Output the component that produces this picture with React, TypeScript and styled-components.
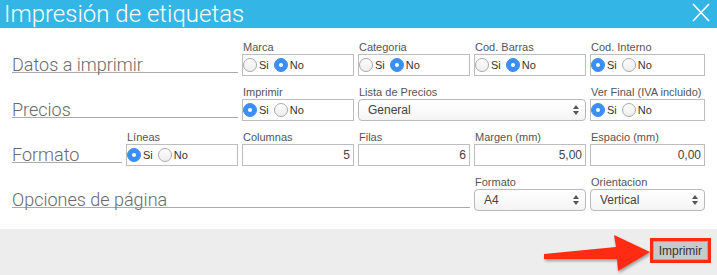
import React from "react";
import styled, { createGlobalStyle } from "styled-components";

const GlobalStyle = createGlobalStyle`
  html, body {
    margin: 0;
    padding: 0;
    background: #ffffff;
  }
  body {
    font-family: "Liberation Sans", Arial, sans-serif;
  }
`;

const Dialog = styled.div`
  width: 717px;
  height: 275px;
  display: flex;
  flex-direction: column;
  background: #fff;
  overflow: hidden;
`;

const Header = styled.div`
  height: 28px;
  background: #33b5e5;
  display: flex;
  align-items: center;
  justify-content: space-between;
  padding: 0 7px 0 4px;
`;

const Title = styled.h1`
  margin: 0;
  font-family: "Roboto Light", Roboto, "Noto Sans", sans-serif;
  font-weight: 300;
  font-size: 24px;
  line-height: 28px;
  color: #fff;
`;

const CloseButton = styled.button`
  border: 0;
  padding: 0;
  background: none;
  width: 18px;
  height: 19px;
  display: flex;
  margin-top: -3px;
`;

const Body = styled.div`
  flex: 1;
  padding: 12px 12px 0 12px;
  display: flex;
  flex-direction: column;
  gap: 9px;
`;

const Row = styled.div`
  display: grid;
  grid-template-columns: 110px 112px 112px 112px 112px 115px;
  column-gap: 4px;
  align-items: end;
`;

const SectionTitle = styled.div<{ $span: number }>`
  grid-column: span ${(p) => p.$span};
  font-family: "Roboto Light", Roboto, "Noto Sans", sans-serif;
  font-weight: 300;
  font-size: 18px;
  line-height: 15px;
  color: #6a6a6a;
  border-bottom: 1px solid #aaa;
  margin-bottom: 3px;
  white-space: nowrap;
`;

const Field = styled.div<{ $span?: number }>`
  grid-column: span ${(p) => p.$span ?? 1};
  display: flex;
  flex-direction: column;
`;

const FieldLabel = styled.label`
  font-size: 11px;
  line-height: 14px;
  height: 14px;
  color: #555;
  padding-left: 1px;
  white-space: nowrap;
`;

const RadioBox = styled.div`
  height: 22px;
  box-sizing: border-box;
  border: 1px solid #bdbdbd;
  display: flex;
  align-items: center;
  background: #fff;
`;

const RadioOption = styled.span`
  display: flex;
  align-items: center;
  gap: 2px;
  margin-right: 5px;
  font-size: 11px;
  color: #333;
`;

const RadioDot = styled.span<{ $checked: boolean }>`
  width: 14px;
  height: 14px;
  box-sizing: border-box;
  border-radius: 50%;
  display: inline-flex;
  align-items: center;
  justify-content: center;
  background: ${(p) => (p.$checked ? "#3b8ef5" : "linear-gradient(#fdfdfd, #eeeeee)")};
  border: 1px solid ${(p) => (p.$checked ? "#3b8ef5" : "#a9a9a9")};
  &::after {
    content: "";
    width: 4px;
    height: 4px;
    border-radius: 50%;
    background: #fff;
    display: ${(p) => (p.$checked ? "block" : "none")};
  }
`;

const NumberInput = styled.div`
  height: 22px;
  box-sizing: border-box;
  border: 1px solid #bdbdbd;
  display: flex;
  align-items: center;
  justify-content: flex-end;
  padding-right: 3px;
  font-size: 12px;
  color: #444;
  background: #fff;
`;

const Select = styled.div`
  height: 22px;
  box-sizing: border-box;
  border: 1px solid #b9b9b9;
  border-radius: 4px;
  background: linear-gradient(#ffffff, #f4f4f4);
  display: flex;
  align-items: center;
  justify-content: space-between;
  padding: 0 6px 0 9px;
  font-size: 12px;
  color: #444;
`;

const Footer = styled.div`
  position: relative;
  height: 46px;
  background: #ededed;
  display: flex;
  justify-content: flex-end;
  align-items: flex-start;
  padding: 9px 6px 0 0;
  box-sizing: border-box;
`;

const PrintButton = styled.button`
  height: 25px;
  box-sizing: border-box;
  border: 3px solid #ff2b12;
  background: #c9c9c9;
  box-shadow: inset 0 0 0 1px #a9a9a9;
  padding: 0 6px;
  font-family: "Liberation Sans", Arial, sans-serif;
  font-size: 12px;
  color: #333;
`;

const Arrow = styled.svg`
  position: absolute;
  left: 540px;
  top: 0;
  filter: drop-shadow(1px 2px 1.5px rgba(0, 0, 0, 0.35));
`;

function Radio({ value }: { value: "si" | "no" }) {
  return (
    <RadioBox>
      <RadioOption>
        <RadioDot $checked={value === "si"} />
        Si
      </RadioOption>
      <RadioOption>
        <RadioDot $checked={value === "no"} />
        No
      </RadioOption>
    </RadioBox>
  );
}

function SelectArrows() {
  return (
    <svg width="6" height="10" viewBox="0 0 6 10">
      <path d="M0 4 L3 0 L6 4 Z" fill="#555" />
      <path d="M0 6 L3 10 L6 6 Z" fill="#555" />
    </svg>
  );
}

export default function App() {
  return (
    <>
      <GlobalStyle />
      <Dialog>
        <Header>
          <Title>Impresión de etiquetas</Title>
          <CloseButton aria-label="Cerrar">
            <svg width="18" height="19" viewBox="0 0 18 19">
              <path d="M1 1 L17 18 M17 1 L1 18" stroke="#fff" strokeWidth="1.6" />
            </svg>
          </CloseButton>
        </Header>
        <Body>
          <Row>
            <SectionTitle $span={2}>Datos a imprimir</SectionTitle>
            <Field>
              <FieldLabel>Marca</FieldLabel>
              <Radio value="no" />
            </Field>
            <Field>
              <FieldLabel>Categoria</FieldLabel>
              <Radio value="no" />
            </Field>
            <Field>
              <FieldLabel>Cod. Barras</FieldLabel>
              <Radio value="no" />
            </Field>
            <Field>
              <FieldLabel>Cod. Interno</FieldLabel>
              <Radio value="si" />
            </Field>
          </Row>
          <Row>
            <SectionTitle $span={2}>Precios</SectionTitle>
            <Field>
              <FieldLabel>Imprimir</FieldLabel>
              <Radio value="si" />
            </Field>
            <Field $span={2}>
              <FieldLabel>Lista de Precios</FieldLabel>
              <Select>
                General
                <SelectArrows />
              </Select>
            </Field>
            <Field>
              <FieldLabel>Ver Final (IVA incluido)</FieldLabel>
              <Radio value="si" />
            </Field>
          </Row>
          <Row>
            <SectionTitle $span={1}>Formato</SectionTitle>
            <Field>
              <FieldLabel>Líneas</FieldLabel>
              <Radio value="si" />
            </Field>
            <Field>
              <FieldLabel>Columnas</FieldLabel>
              <NumberInput>5</NumberInput>
            </Field>
            <Field>
              <FieldLabel>Filas</FieldLabel>
              <NumberInput>6</NumberInput>
            </Field>
            <Field>
              <FieldLabel>Margen (mm)</FieldLabel>
              <NumberInput>5,00</NumberInput>
            </Field>
            <Field>
              <FieldLabel>Espacio (mm)</FieldLabel>
              <NumberInput>0,00</NumberInput>
            </Field>
          </Row>
          <Row>
            <SectionTitle $span={4}>Opciones de página</SectionTitle>
            <Field>
              <FieldLabel>Formato</FieldLabel>
              <Select>
                A4
                <SelectArrows />
              </Select>
            </Field>
            <Field>
              <FieldLabel>Orientacion</FieldLabel>
              <Select>
                Vertical
                <SelectArrows />
              </Select>
            </Field>
          </Row>
        </Body>
        <Footer>
          <Arrow width="115" height="46" viewBox="0 0 115 46">
            <polygon points="4,25 76,18 74,6 110,23 78,42 77,30 4,30" fill="#ff2b12" />
          </Arrow>
          <PrintButton>Imprimir</PrintButton>
        </Footer>
      </Dialog>
    </>
  );
}
